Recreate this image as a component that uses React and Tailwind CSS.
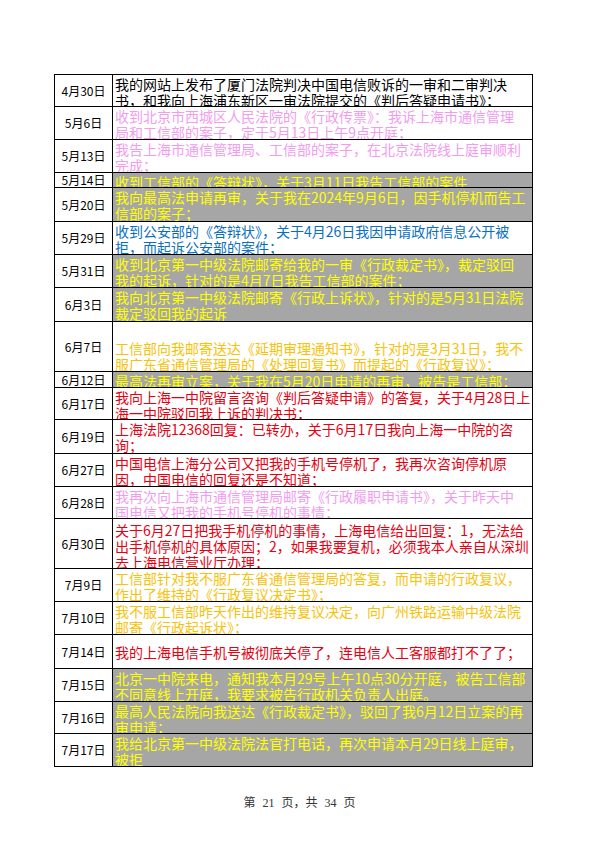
const rows = [
  { d: "4月30日", h: 32, c: "text-black", lines: ["我的网站上发布了厦门法院判决中国电信败诉的一审和二审判决", "书，和我向上海浦东新区一审法院提交的《判后答疑申请书》；"] },
  { d: "5月6日", h: 33, c: "text-[#f29cf0]", lines: ["收到北京市西城区人民法院的《行政传票》：我诉上海市通信管理", "局和工信部的案子，定于5月13日上午9点开庭；"] },
  { d: "5月13日", h: 33, c: "text-[#f29cf0]", lines: ["我告上海市通信管理局、工信部的案子，在北京法院线上庭审顺利", "完成；"] },
  { d: "5月14日", h: 15, c: "text-[#ffff00]", gray: true, lines: ["收到工信部的《答辩状》，关于3月11日我告工信部的案件"] },
  { d: "5月20日", h: 34, c: "text-[#ffff00]", gray: true, lines: ["我向最高法申请再审，关于我在2024年9月6日，因手机停机而告工", "信部的案子；"] },
  { d: "5月29日", h: 33, c: "text-[#0a6fbf]", lines: ["收到公安部的《答辩状》，关于4月26日我因申请政府信息公开被", "拒，而起诉公安部的案件；"] },
  { d: "5月31日", h: 33, c: "text-[#ffff00]", gray: true, lines: ["收到北京第一中级法院邮寄给我的一审《行政裁定书》，裁定驳回", "我的起诉，针对的是4月7日我告工信部的案件；"] },
  { d: "6月3日", h: 34, c: "text-[#ffff00]", gray: true, lines: ["我向北京第一中级法院邮寄《行政上诉状》，针对的是5月31日法院", "裁定驳回我的起诉"] },
  { d: "6月7日", h: 50, c: "text-[#f7c20a]", pad: "pt-[18px]", lines: ["工信部向我邮寄送达《延期审理通知书》，针对的是3月31日，我不", "服广东省通信管理局的《处理回复书》而提起的《行政复议》；"] },
  { d: "6月12日", h: 16, c: "text-[#ffff00]", gray: true, lines: ["最高法再审立案，关于我在5月20日申请的再审，被告是工信部；"] },
  { d: "6月17日", h: 32, c: "text-[#e60012]", lines: ["我向上海一中院留言咨询《判后答疑申请》的答复，关于4月28日上", "海一中院驳回我上诉的判决书；"] },
  { d: "6月19日", h: 34, c: "text-[#e60012]", lines: ["上海法院12368回复：已转办，关于6月17日我向上海一中院的咨", "询；"] },
  { d: "6月27日", h: 33, c: "text-[#e60012]", lines: ["中国电信上海分公司又把我的手机号停机了，我再次咨询停机原", "因，中国电信的回复还是不知道；"] },
  { d: "6月28日", h: 32, c: "text-[#f29cf0]", lines: ["我再次向上海市通信管理局邮寄《行政履职申请书》，关于昨天中", "国电信又把我的手机号停机的事情；"] },
  { d: "6月30日", h: 50, c: "text-[#e60012]", pad: "pt-[3px]", lines: ["关于6月27日把我手机停机的事情，上海电信给出回复：1，无法给", "出手机停机的具体原因；2，如果我要复机，必须我本人亲自从深圳", "去上海电信营业厅办理；"] },
  { d: "7月9日", h: 33, c: "text-[#f7c20a]", lines: ["工信部针对我不服广东省通信管理局的答复，而申请的行政复议，", "作出了维持的《行政复议决定书》；"] },
  { d: "7月10日", h: 33, c: "text-[#f7c20a]", lines: ["我不服工信部昨天作出的维持复议决定，向广州铁路运输中级法院", "邮寄《行政起诉状》；"] },
  { d: "7月14日", h: 34, c: "text-[#e60012]", pad: "flex flex-col justify-center", lines: ["我的上海电信手机号被彻底关停了，连电信人工客服都打不了了；"] },
  { d: "7月15日", h: 33, c: "text-[#ffff00]", gray: true, lines: ["北京一中院来电，通知我本月29号上午10点30分开庭，被告工信部", "不同意线上开庭，我要求被告行政机关负责人出庭。"] },
  { d: "7月16日", h: 32, c: "text-[#ffff00]", gray: true, lines: ["最高人民法院向我送达《行政裁定书》，驳回了我6月12日立案的再", "审申请；"] },
  { d: "7月17日", h: 33, c: "text-[#ffff00]", gray: true, lines: ["我给北京第一中级法院法官打电话，再次申请本月29日线上庭审，", "被拒"] },
];

function Row({ r }) {
  return (
    <div className="grid grid-cols-[58px_1fr] border-t border-black" style={{ height: r.h }}>
      <div className="flex items-center justify-center border-r border-black text-[12px] text-black overflow-hidden">
        {r.d}
      </div>
      <div
        className={
          "overflow-hidden pl-[2px] text-[14px] leading-[16px] " +
          r.c +
          (r.gray ? " bg-[#a6a6a6] " : " bg-white ") +
          (r.pad || "pt-[1px]")
        }
      >
        {r.lines.map((l, i) => (
          <div key={i} className="whitespace-nowrap">{l}</div>
        ))}
      </div>
    </div>
  );
}

export default function App() {
  return (
    <div className="w-[599px] h-[848px] bg-white font-['Noto_Sans_CJK_SC',sans-serif]">
      <div className="pt-[74px] pl-[54px]">
        <div className="w-[479px] border-x border-b border-black">
          {rows.map((r) => (
            <Row key={r.d} r={r} />
          ))}
        </div>
      </div>
      <div className="mt-[27px] text-center text-[12px] text-[#333] [word-spacing:4px] font-['Liberation_Serif','Noto_Sans_CJK_SC',serif]">
        第 21 页，共 34 页
      </div>
    </div>
  );
}
